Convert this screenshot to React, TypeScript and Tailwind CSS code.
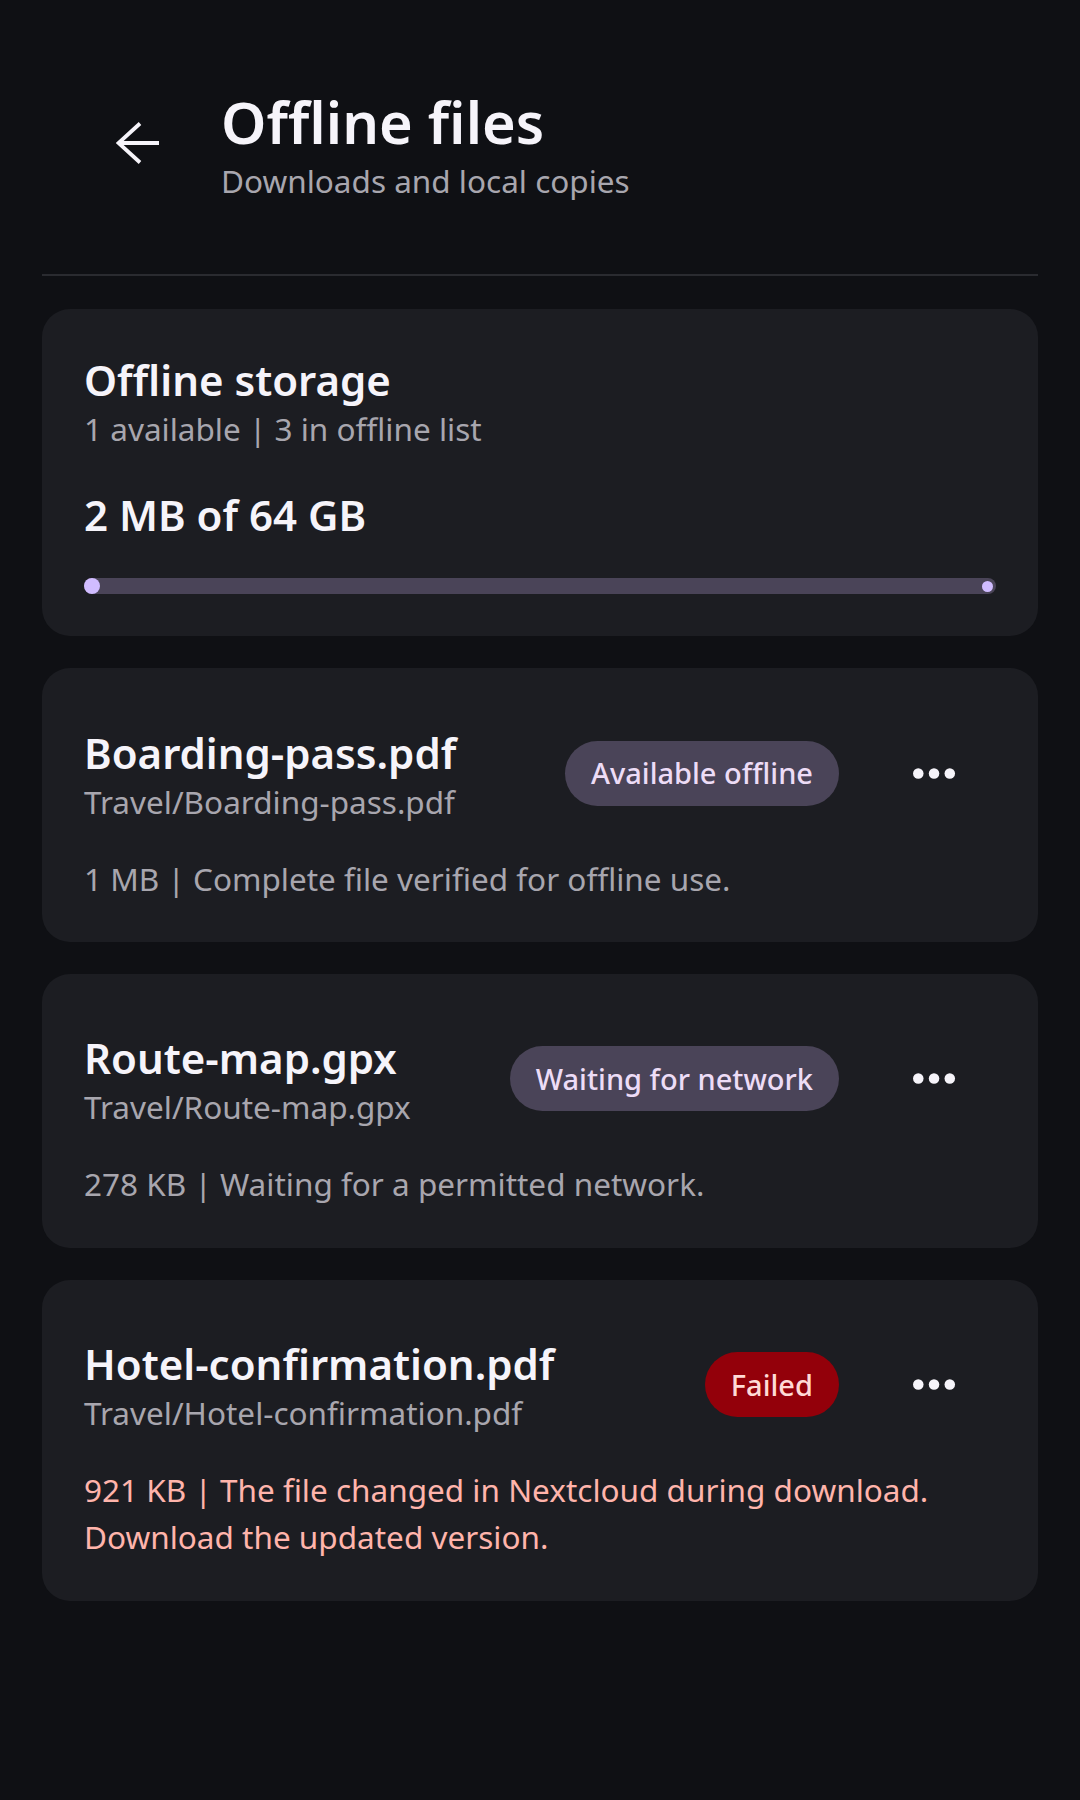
import React from "react";

type Status = "ok" | "waiting" | "failed";

interface OfflineFile {
  name: string;
  path: string;
  meta: string[];
  badge: string;
  status: Status;
}

const files: OfflineFile[] = [
  {
    name: "Boarding-pass.pdf",
    path: "Travel/Boarding-pass.pdf",
    meta: ["1 MB | Complete file verified for offline use."],
    badge: "Available offline",
    status: "ok",
  },
  {
    name: "Route-map.gpx",
    path: "Travel/Route-map.gpx",
    meta: ["278 KB | Waiting for a permitted network."],
    badge: "Waiting for network",
    status: "waiting",
  },
  {
    name: "Hotel-confirmation.pdf",
    path: "Travel/Hotel-confirmation.pdf",
    meta: ["921 KB | The file changed in Nextcloud during download.", "Download the updated version."],
    badge: "Failed",
    status: "failed",
  },
];

function BackArrow() {
  return (
    <svg width="44" height="42" viewBox="0 0 44 42" fill="none" stroke="#f6f4fa" strokeWidth="3.8">
      <path d="M43 21H3" />
      <path d="M24 1.5L2.5 21L24 40.5" />
    </svg>
  );
}

function MoreDots() {
  return (
    <svg width="63" height="63" viewBox="0 0 24 24" fill="#f6f4fa">
      <circle cx="6.2" cy="12" r="2" />
      <circle cx="12.2" cy="12" r="2" />
      <circle cx="18.2" cy="12" r="2" />
    </svg>
  );
}

function StorageCard() {
  return (
    <section className="rounded-[28px] bg-[#1c1d22] px-[42px] pt-[42px] pb-[42px]">
      <h2 className="text-[42px] leading-[57px] font-semibold text-[#f6f4fa]">Offline storage</h2>
      <p className="text-[31.5px] leading-[42px] text-[#a8a6ae]">1 available | 3 in offline list</p>
      <p className="mt-[36px] text-[42px] leading-[57px] font-semibold text-[#f6f4fa]">2 MB of 64 GB</p>
      <div className="relative mt-[35px] h-[16px] rounded-full bg-[#4a4458]">
        <span className="absolute left-0 top-0 h-[16px] w-[16px] rounded-full bg-[#d0bcff]" />
        <span className="absolute right-[3px] top-[2.5px] h-[11px] w-[11px] rounded-full bg-[#d0bcff]" />
      </div>
    </section>
  );
}

function FileCard({ file }: { file: OfflineFile; key?: string }) {
  const badgeClass =
    file.status === "failed" ? "bg-[#93000a] text-[#ffdad6]" : "bg-[#4a4458] text-[#eddcf6]";
  const metaClass = file.status === "failed" ? "text-[#ffb4ab]" : "text-[#a8a6ae]";

  return (
    <section className="rounded-[28px] bg-[#1c1d22] px-[42px] pt-[42px] pb-[40px]">
      <div className="flex h-[126px] items-center">
        <div className="min-w-0 flex-1">
          <h3 className="text-[42px] leading-[57px] font-semibold text-[#f6f4fa]">{file.name}</h3>
          <p className="text-[31.5px] leading-[42px] text-[#a8a6ae]">{file.path}</p>
        </div>
        <span
          className={`flex h-[65px] shrink-0 items-center rounded-full px-[26px] text-[29px] font-medium ${badgeClass}`}
        >
          {file.badge}
        </span>
        <button className="ml-[31px] flex h-[126px] w-[126px] shrink-0 items-center justify-center">
          <MoreDots />
        </button>
      </div>
      <div className={`mt-[18.5px] text-[31.5px] leading-[47.25px] ${metaClass}`}>
        {file.meta.map((line) => (
          <p key={line}>{line}</p>
        ))}
      </div>
    </section>
  );
}

export default function App() {
  return (
    <div
      className="min-h-screen bg-[#0f1014] pb-[40px]"
      style={{ fontFamily: '"Noto Sans", "Open Sans", sans-serif' }}
    >
      {/* Header */}
      <header className="flex items-center pl-[116px] pt-[84px] pb-[72px]">
        <BackArrow />
        <div className="ml-[61px]">
          <h1 className="text-[57.75px] leading-[76px] font-semibold text-[#f6f4fa]">Offline files</h1>
          <p className="text-[31.5px] leading-[42px] text-[#a8a6ae]">Downloads and local copies</p>
        </div>
      </header>

      <div className="mx-[42px] h-[2px] bg-[#2a2b30]" />

      <main className="mx-[42px] mt-[33px] flex flex-col gap-[32px]">
        <StorageCard />
        {files.map((f) => (
          <FileCard key={f.name} file={f} />
        ))}
      </main>
    </div>
  );
}
